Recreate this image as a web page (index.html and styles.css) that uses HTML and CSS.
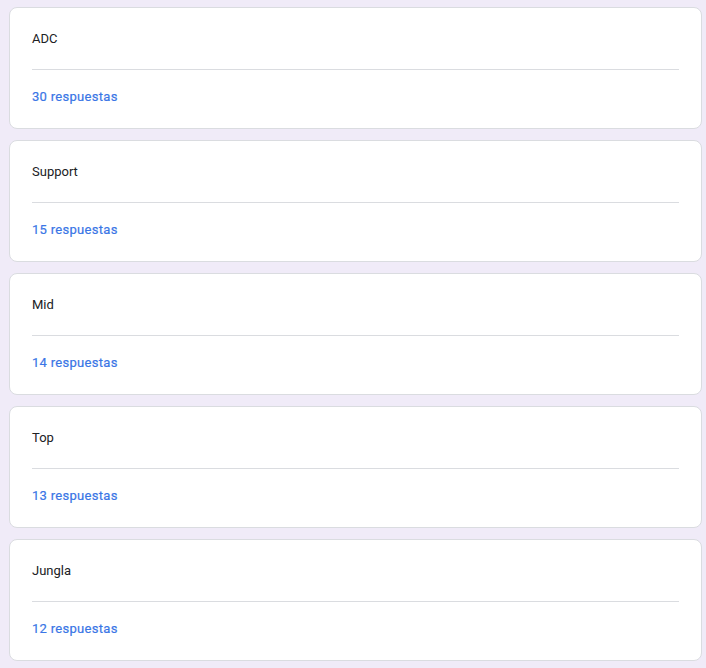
FILE: index.html
```html
<!DOCTYPE html>
<html lang="es">
<head>
<meta charset="utf-8">
<title>Respuestas</title>
<link rel="stylesheet" href="styles.css">
</head>
<body>
<main class="list">
  <section class="card">
    <div class="title">ADC</div>
    <hr class="divider">
    <div class="count">30 respuestas</div>
  </section>
  <section class="card">
    <div class="title">Support</div>
    <hr class="divider">
    <div class="count">15 respuestas</div>
  </section>
  <section class="card">
    <div class="title">Mid</div>
    <hr class="divider">
    <div class="count">14 respuestas</div>
  </section>
  <section class="card">
    <div class="title">Top</div>
    <hr class="divider">
    <div class="count">13 respuestas</div>
  </section>
  <section class="card">
    <div class="title">Jungla</div>
    <hr class="divider">
    <div class="count">12 respuestas</div>
  </section>
</main>
</body>
</html>
```
FILE: styles.css
```css
html, body {
  margin: 0;
  padding: 0;
  background: #f0ebf8;
}

body {
  font-family: Roboto, "Liberation Sans", Arial, sans-serif;
  color: #202124;
}

.list {
  display: flex;
  flex-direction: column;
  gap: 11px;
  padding: 7px 4px 0 9px;
}

.card {
  background: #ffffff;
  border: 1px solid #dadce0;
  border-radius: 8px;
  padding: 21px 22px 21px 22px;
  display: flex;
  flex-direction: column;
}

.title {
  font-size: 13px;
  line-height: 20px;
}

.divider {
  border: 0;
  border-top: 1px solid #dadce0;
  margin: 20px 0 17px 0;
  height: 0;
}

.count {
  font-size: 13px;
  line-height: 20px;
  font-weight: 400;
  color: #3a76e6;
  letter-spacing: 0.3px;
  -webkit-text-stroke: 0.2px #3a76e6;
}
```
